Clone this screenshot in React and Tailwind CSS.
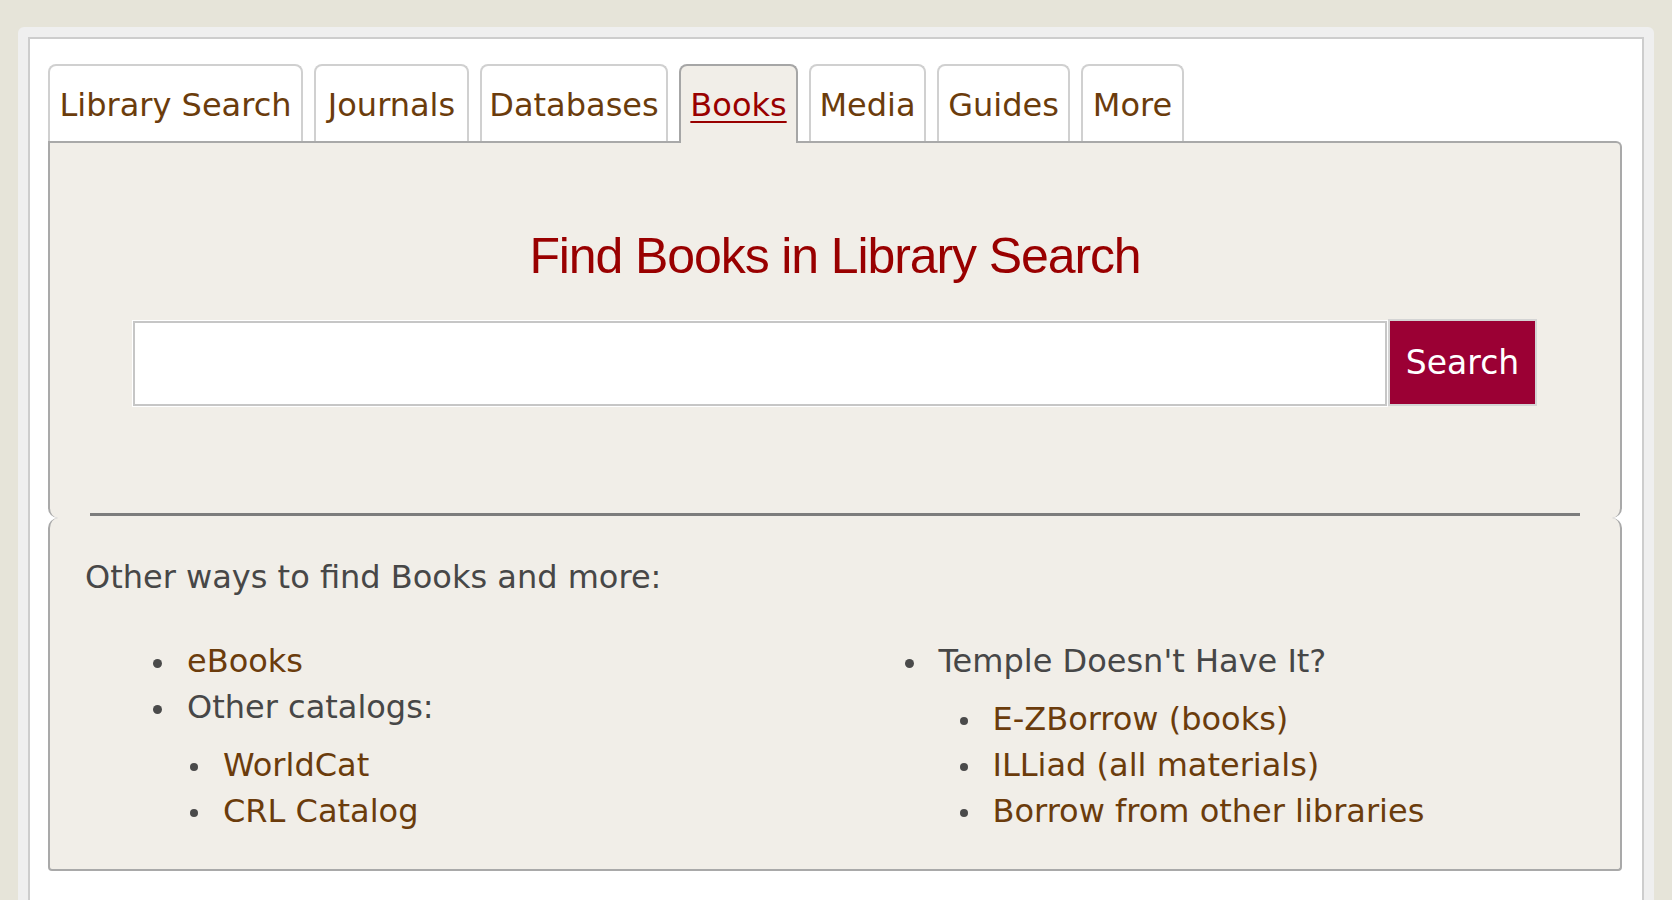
import { useState } from "react";

const tabs = [
  { label: "Library Search", w: "w-[255px]" },
  { label: "Journals", w: "w-[155px]" },
  { label: "Databases", w: "w-[188px]" },
  { label: "Books", w: "w-[119px]" },
  { label: "Media", w: "w-[117px]" },
  { label: "Guides", w: "w-[133px]" },
  { label: "More", w: "w-[103px]" },
];

function Dot({ small }) {
  return (
    <span
      className={
        small
          ? "inline-block w-[8px] h-[8px] rounded-full bg-[#4a4a4a] translate-y-[2px] shrink-0"
          : "inline-block w-[9px] h-[9px] rounded-full bg-[#4a4a4a] translate-y-[2px] shrink-0"
      }
    />
  );
}

function Item({ pad, small, link, children }) {
  return (
    <li className={`flex items-center h-[46px] ${pad}`}>
      <Dot small={small} />
      <span className={`ml-[25px] ${link ? "text-[#6b3c0c]" : "text-[#474747]"}`}>
        {link ? <a href="#">{children}</a> : children}
      </span>
    </li>
  );
}

export default function App() {
  const [active, setActive] = useState("Books");
  const [query, setQuery] = useState("");

  return (
    <div
      className="min-h-screen bg-[#e6e4d9] px-[18px] pt-[27px]"
      style={{ fontFamily: '"DejaVu Sans", Verdana, sans-serif' }}
    >
      {/* outer frame */}
      <div className="bg-[#efefef] rounded-t-[6px] px-[10px] pt-[10px]">
        <div className="bg-white border-2 border-b-0 border-[#cdcdcd] pl-[18px] pr-[20px] pt-[25px] pb-[60px]">

          {/* Tabs */}
          <div className="flex items-end gap-[11px] text-[32px]">
            {tabs.map(t =>
              t.label === active ? (
                <button
                  key={t.label}
                  onClick={() => setActive(t.label)}
                  className={`${t.w} relative z-10 h-[79px] -mb-[2px] flex items-center justify-center rounded-t-[8px] border-2 border-b-0 border-[#a6a6a6] bg-[#f1eee8] text-[#990000] underline underline-offset-[5px] decoration-2`}
                >
                  {t.label}
                </button>
              ) : (
                <button
                  key={t.label}
                  onClick={() => setActive(t.label)}
                  className={`${t.w} h-[77px] pt-[2px] flex items-center justify-center rounded-t-[8px] border-2 border-b-0 border-[#d0d0d0] bg-white text-[#6b3c0c]`}
                >
                  {t.label}
                </button>
              )
            )}
          </div>

          {/* Search panel */}
          <div className="border-2 border-b-0 border-[#a9a9a9] rounded-tr-[6px] rounded-b-[10px] bg-[#f1eee8] pt-[83px] pb-[2px]">
            <h1
              className="text-center text-[50px] leading-[60px] tracking-[-1.1px] text-[#990000]"
              style={{ fontFamily: '"Liberation Sans", Arial, sans-serif' }}
            >
              Find Books in Library Search
            </h1>
            <div className="flex items-end mx-[83px] mt-[33px]">
              <input
                value={query}
                onChange={e => setQuery(e.target.value)}
                className="flex-1 h-[85px] bg-white border-2 border-[#c6c6c6] shadow-[0_0_0_1px_#fff] outline-none px-3 text-[32px]"
              />
              <button className="ml-[1px] w-[149px] h-[87px] bg-[#9b0034] border-2 border-[#d4d4d4] text-white text-[33px]">
                Search
              </button>
            </div>
            <div className="mx-[40px] mt-[107px] h-[3px] bg-[#7c7c7c]" />
          </div>

          {/* Other ways panel */}
          <div className="border-2 border-t-0 border-[#a9a9a9] rounded-t-[10px] rounded-b-[4px] bg-[#f1eee8] pl-[35px] pr-[36px] pt-[36px] pb-[35px] text-[32px] leading-[46px]">
            <p className="text-[#474747]">Other ways to find Books and more:</p>
            <div className="grid grid-cols-2 mt-[38px]">
              <ul>
                <Item pad="pl-[68px]" link>eBooks</Item>
                <Item pad="pl-[68px]">Other catalogs:</Item>
                <ul className="mt-[12px]">
                  <Item pad="pl-[105px]" small link>WorldCat</Item>
                  <Item pad="pl-[105px]" small link>CRL Catalog</Item>
                </ul>
              </ul>
              <ul>
                <Item pad="pl-[70px]">Temple Doesn't Have It?</Item>
                <ul className="mt-[12px]">
                  <Item pad="pl-[125px]" small link>E-ZBorrow (books)</Item>
                  <Item pad="pl-[125px]" small link>ILLiad (all materials)</Item>
                  <Item pad="pl-[125px]" small link>Borrow from other libraries</Item>
                </ul>
              </ul>
            </div>
          </div>

        </div>
      </div>
    </div>
  );
}
